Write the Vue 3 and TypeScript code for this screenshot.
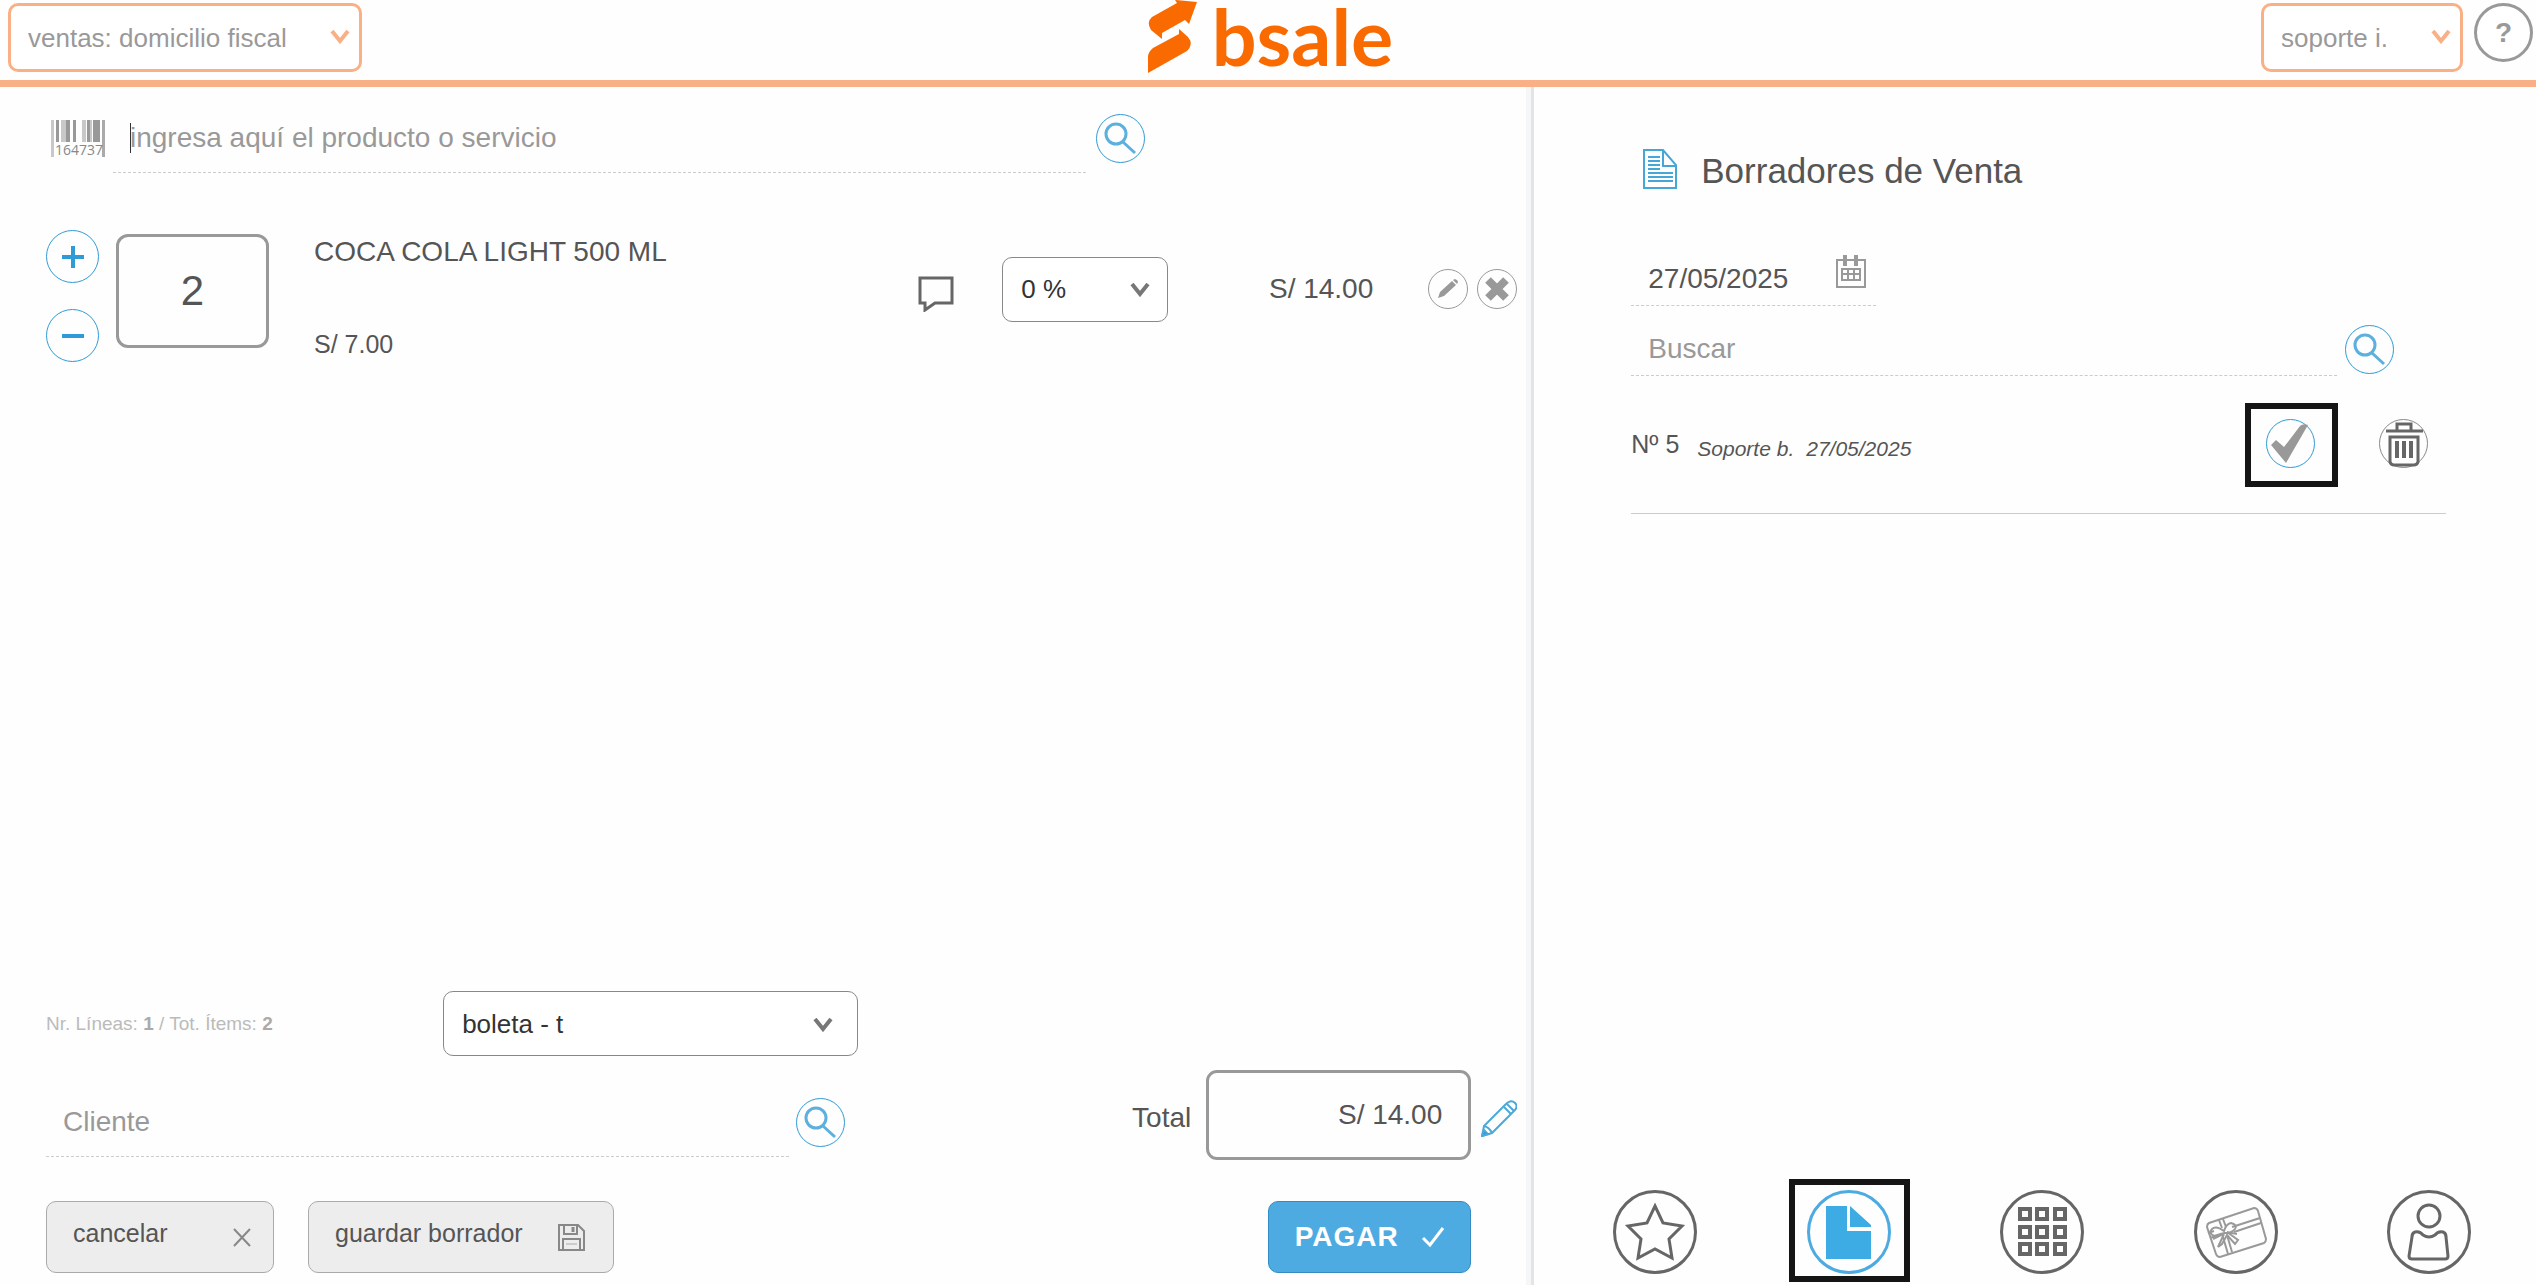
<script setup lang="ts">
import { ref } from 'vue'

interface Draft {
  id: number
  author: string
  date: string
}

const product = ref('')
const quantity = ref('2')
const client = ref('')
const total = ref('S/ 14.00')
const date = ref('27/05/2025')
const query = ref('')
const drafts = ref<Draft[]>([{ id: 5, author: 'Soporte b.', date: '27/05/2025' }])

const columnStops: number[] = [20, 37, 55]
const rowStops: number[] = [19, 37, 54]
</script>

<template>
  <div class="app">
    <header class="topbar">
      <div class="picker picker-branch">
        <select aria-label="Sucursal">
          <option>ventas: domicilio fiscal</option>
        </select>
        <svg class="chevron" width="20" height="14" viewBox="0 0 20 14"><path d="M2 1 10 11 18 1" /></svg>
      </div>
      <a class="logo" href="#" aria-label="bsale">
        <svg width="49" height="73" viewBox="0 0 49 73">
          <path d="M27 0H28L49 2 41 24 37 20 14 33V39L3 30Q-2 22 4 17L29 3Z" />
          <path d="M31 29 40 37Q46 44 39 51L0 73V56Q1 51 5 48L31 34Z" />
        </svg>
        <span>bsale</span>
      </a>
      <div class="account">
        <div class="picker picker-user">
          <select aria-label="Usuario">
            <option>soporte i.</option>
          </select>
          <svg class="chevron" width="20" height="14" viewBox="0 0 20 14"><path d="M2 1 10 11 18 1" /></svg>
        </div>
        <button class="help" type="button">?</button>
      </div>
    </header>

    <main class="workspace">
      <section class="sale">
        <div class="product-search">
          <svg class="barcode" width="54" height="37" viewBox="0 0 54 37">
            <g fill="#c8c8c8">
              <rect x="0" y="0" width="3" height="37" />
              <rect x="10" y="0" width="5" height="22" />
              <rect x="31" y="0" width="4" height="22" />
              <rect x="39" y="0" width="2" height="22" />
            </g>
            <g fill="#999">
              <rect x="5" y="0" width="3" height="22" />
              <rect x="15" y="0" width="4" height="22" />
              <rect x="22" y="0" width="3" height="22" />
              <rect x="36" y="0" width="3" height="22" />
              <rect x="42" y="0" width="7" height="22" />
              <rect x="51" y="0" width="3" height="37" fill="#aaa" />
            </g>
            <text x="4" y="35">164737</text>
          </svg>
          <div class="field">
            <input v-model="product" type="text" placeholder="ingresa aquí el producto o servicio" aria-label="Producto o servicio" />
            <span class="caret"></span>
          </div>
          <button class="round search" type="button" aria-label="Buscar producto">
            <svg width="47" height="47" viewBox="0 0 47 47"><circle cx="19" cy="19" r="10" /><path d="m26 27 12 11" /></svg>
          </button>
        </div>

        <div class="item">
          <div class="steppers">
            <button type="button" aria-label="Agregar">
              <svg width="22" height="22" viewBox="0 0 22 22"><path d="M0 11H22M11 0V22" /></svg>
            </button>
            <button type="button" aria-label="Quitar">
              <svg width="22" height="22" viewBox="0 0 22 22"><path d="M0 11H22" /></svg>
            </button>
          </div>
          <input v-model="quantity" class="quantity" type="text" aria-label="Cantidad" />
          <div class="description">
            <div class="name">COCA COLA LIGHT 500 ML</div>
            <div class="unit-price">S/ 7.00</div>
          </div>
          <div class="item-tools">
            <button class="plain comment" type="button" aria-label="Comentario">
              <svg width="36" height="36" viewBox="0 0 36 36"><path d="M2 2H34V27H17L7 34V27H2Z" fill="none" stroke="#666" stroke-width="3" /></svg>
            </button>
            <div class="picker picker-discount">
              <select aria-label="Descuento">
                <option>0 %</option>
              </select>
              <svg class="chevron" width="20" height="14" viewBox="0 0 20 14"><path d="M2 1 10 11 18 1" /></svg>
            </div>
            <div class="amount">S/ 14.00</div>
            <button class="round small" type="button" aria-label="Editar">
              <svg width="38" height="38" viewBox="0 0 38 38"><path d="m9 28 2-6L23 11l4 4-12 11ZM24 10l2-1q3 1 3 3l-1 2Z" fill="#999" /></svg>
            </button>
            <button class="round small" type="button" aria-label="Eliminar">
              <svg width="38" height="38" viewBox="0 0 38 38"><path d="m10 10 18 18M28 10 10 28" stroke="#999" stroke-width="8" /></svg>
            </button>
          </div>
        </div>

        <footer class="checkout">
          <div class="document">
            <div class="document-row">
              <div class="counts">Nr. Líneas: <b>1</b> / Tot. Ítems: <b>2</b></div>
              <div class="picker picker-document">
                <select aria-label="Documento">
                  <option>boleta - t</option>
                </select>
                <svg class="chevron" width="20" height="14" viewBox="0 0 20 14"><path d="M2 1 10 11 18 1" /></svg>
              </div>
            </div>
            <div class="client-row">
              <div class="field">
                <input v-model="client" type="text" placeholder="Cliente" aria-label="Cliente" />
              </div>
              <button class="round search" type="button" aria-label="Buscar cliente">
                <svg width="47" height="47" viewBox="0 0 47 47"><circle cx="19" cy="19" r="10" /><path d="m26 27 12 11" /></svg>
              </button>
            </div>
            <div class="actions">
              <button class="secondary cancel" type="button">
                <span>cancelar</span>
                <svg width="18" height="19" viewBox="0 0 18 19"><path d="m1 1 16 17M17 1 1 18" fill="none" stroke="#888" stroke-width="2" /></svg>
              </button>
              <button class="secondary save" type="button">
                <span>guardar borrador</span>
                <svg width="27" height="27" viewBox="0 0 27 27" fill="none" stroke="#888" stroke-width="2">
                  <path d="M1 1H20L26 7V26H1ZM6 1V10H19V1M5 26V15H22V26" />
                  <path d="M15 3V8" stroke-width="3" />
                  <path d="M8 20H19" stroke="#ccc" />
                </svg>
              </button>
            </div>
          </div>

          <div class="payment">
            <div class="total-row">
              <label for="total">Total</label>
              <input id="total" v-model="total" type="text" />
              <button class="plain edit-total" type="button" aria-label="Editar total">
                <svg width="36" height="37" viewBox="0 0 36 37" fill="none" stroke="#4ba9d9" stroke-width="2">
                  <path d="M1 36 3 26 25 4Q30-1 34 3T32 12L11 33Z" />
                  <path d="M23 7 30 14M26 4 33 11M3 26Q8 27 11 33" />
                  <path d="m1 36 2-6 4 4Z" fill="#2f94cb" />
                </svg>
              </button>
            </div>
            <button class="pay" type="button">
              <span>PAGAR</span>
              <svg width="24" height="22" viewBox="0 0 24 22"><path d="m2 12 7 7L22 2" fill="none" stroke="#fff" stroke-width="3" /></svg>
            </button>
          </div>
        </footer>
      </section>

      <aside class="side">
        <div class="drafts">
          <h1>
            <svg width="34" height="40" viewBox="0 0 34 40" fill="none" stroke="#45a6d8" stroke-width="2">
              <path d="M1 1H20L33 16V39H1ZM20 1V17H33" />
              <path d="M5 8H17M5 12H17M5 16H17M5 20H17M5 24H30M5 28H30M5 32H30" />
            </svg>
            <span>Borradores de Venta</span>
          </h1>
          <div class="date-field">
            <input v-model="date" type="text" aria-label="Fecha" />
            <button class="plain" type="button" aria-label="Calendario">
              <svg width="30" height="34" viewBox="0 0 30 34" fill="none" stroke="#999" stroke-width="2">
                <path d="M1 5H29V32H1ZM6 14H24V25H6ZM12 14V25M18 14V25M6 19H24" />
                <path d="M9 0V11M20 0V11" stroke-width="4" />
              </svg>
            </button>
          </div>
          <div class="draft-search">
            <div class="field">
              <input v-model="query" type="text" placeholder="Buscar" aria-label="Buscar" />
            </div>
            <button class="round search" type="button" aria-label="Buscar borrador">
              <svg width="47" height="47" viewBox="0 0 47 47"><circle cx="19" cy="19" r="10" /><path d="m26 27 12 11" /></svg>
            </button>
          </div>
          <ul>
            <li v-for="draft in drafts" :key="draft.id">
              <span class="number">Nº {{ draft.id }}</span>
              <span class="detail"><i>{{ draft.author }}</i><i>{{ draft.date }}</i></span>
              <button class="round accept" type="button" aria-label="Usar borrador">
                <svg width="47" height="47" viewBox="0 0 47 47"><path d="m4 25 5-5 8 7L33 6Q36 3 41 5L19 43Z" fill="#999" /></svg>
              </button>
              <button class="round discard" type="button" aria-label="Eliminar borrador">
                <svg width="47" height="47" viewBox="0 0 47 47" fill="none" stroke="#666">
                  <path d="M17 11V4H31V11M6 11H43" stroke-width="3" />
                  <path d="M10 17H38V42Q37 45 34 45H14Q11 45 10 42Z" stroke-width="3" />
                  <path d="M17 21V38M24 21V38M31 21V38" stroke-width="4" />
                </svg>
              </button>
            </li>
          </ul>
        </div>

        <nav>
          <button type="button" aria-label="Favoritos">
            <svg width="78" height="78" viewBox="3 3 78 78">
              <path d="M42 16 50 33 69 36 56 49 59 68 42 59 25 68 28 49 15 36 34 33Z" fill="none" stroke="#666" stroke-width="3" />
            </svg>
          </button>
          <button class="active" type="button" aria-label="Borradores">
            <svg width="78" height="78" viewBox="3 3 78 78" fill="#3dace4">
              <path d="M19 16H40V41H64V69H19ZM43 16 64 35V37H43Z" />
            </svg>
          </button>
          <button type="button" aria-label="Categorías">
            <svg width="78" height="78" viewBox="3 3 78 78" fill="none" stroke="#666" stroke-width="4">
              <template v-for="y in rowStops" :key="y">
                <rect v-for="x in columnStops" :key="x" :x="x" :y="y" width="10" height="10" />
              </template>
            </svg>
          </button>
          <button type="button" aria-label="Gift cards">
            <svg width="78" height="78" viewBox="3 3 78 78" fill="none" stroke="#999" stroke-width="2">
              <path d="M15 33 60 18Q63 18 64 21L72 49Q72 52 70 53L26 67Q23 67 22 64L13 37Q13 34 15 33Z" />
              <path d="M25 30 28 38M29 29 32 37M33 45 38 62M29 47 34 64M38 37 66 28M40 42 67 33M14 43 20 41M16 48 22 46" />
              <path d="M30 41Q22 35 18 39T20 46L30 43Q38 43 41 39T37 33Q32 34 30 41ZM29 44 19 49M30 44 24 57 28 54 33 45 41 54 44 50 33 42M33 42 43 44" />
            </svg>
          </button>
          <button type="button" aria-label="Clientes">
            <svg width="78" height="78" viewBox="3 3 78 78" fill="none" stroke="#666" stroke-width="3">
              <circle cx="42" cy="26" r="11" />
              <path d="M28 42Q33 41 36 45 42 49 48 45 51 41 56 42 59 43 59 47L61 66Q61 69 58 69H25Q22 69 22 66L25 47Q25 43 28 42Z" />
            </svg>
          </button>
        </nav>
      </aside>
    </main>
  </div>
</template>

<style>
body {
  margin: 0;
  background: #fefefe;
}
</style>

<style scoped>
* {
  box-sizing: border-box;
}
.app {
  display: flex;
  flex-direction: column;
  min-height: 100vh;
  font: 28px/32px "Liberation Sans", Arial, sans-serif;
  color: #555;
}
button,
input,
select {
  font: inherit;
  color: inherit;
  margin: 0;
  padding: 0;
  outline: none;
}
button {
  flex: none;
  display: flex;
  align-items: center;
  justify-content: center;
  cursor: pointer;
}
svg {
  flex: none;
  display: block;
}
input {
  min-width: 0;
  background: transparent;
}
input::placeholder {
  color: #999;
  opacity: 1;
}

/* top bar */
.topbar {
  display: grid;
  grid-template-columns: 1fr auto 1fr;
  align-items: start;
  height: 87px;
  padding: 0 3px 0 8px;
  border-bottom: 7px solid #fab087;
}
.picker {
  position: relative;
}
.picker select {
  display: block;
  width: 100%;
  appearance: none;
  border: 1px solid #888;
  border-radius: 10px;
  background: #fff;
  color: #333;
  font-size: 26px;
  height: 65px;
  padding-left: 18px;
}
.chevron {
  position: absolute;
  top: 50%;
  right: 18px;
  margin-top: -6px;
  fill: none;
  stroke: #777;
  stroke-width: 4;
  pointer-events: none;
}
.picker-branch,
.picker-user {
  margin-top: 3px;
}
.picker-branch select,
.picker-user select {
  height: 69px;
  padding-left: 17px;
  border: 3px solid #fab087;
  color: #999;
}
.picker-branch .chevron,
.picker-user .chevron {
  right: 12px;
  margin-top: -8px;
  stroke: #fab087;
}
.picker-branch {
  width: 354px;
}
.picker-user {
  width: 202px;
}
.logo {
  display: flex;
  gap: 15px;
  color: #f96a00;
  text-decoration: none;
}
.logo svg {
  fill: currentColor;
}
.logo span {
  font: bold 79px/72px Lato, sans-serif;
}
.account {
  display: flex;
  justify-content: flex-end;
  gap: 11px;
}
.help {
  width: 59px;
  height: 59px;
  margin-top: 3px;
  border: 3px solid #999;
  border-radius: 50%;
  background: #fff;
  color: #999;
  font-weight: bold;
}

/* shared controls */
.plain {
  border: 0;
  background: none;
}
.round {
  width: 49px;
  height: 49px;
  border: 1px solid #2f9bd6;
  border-radius: 50%;
  background: none;
}
.search svg {
  fill: none;
  stroke: #5bb0de;
  stroke-width: 3;
}
.field {
  position: relative;
  flex: 1;
  display: flex;
  height: 70px;
  border-bottom: 1px dashed #ccc;
}
.field input {
  flex: 1;
  border: 0;
  padding-left: 17px;
}

/* sale */
.workspace {
  flex: 1;
  display: flex;
}
.sale {
  flex: none;
  display: flex;
  flex-direction: column;
  width: 60.5%;
  padding: 16px 14px 12px 46px;
  border-right: 3px solid #e3e4e6;
  box-shadow: inset -5px 0 #f4f6f8;
}
.product-search {
  display: flex;
  align-items: center;
  width: 74.7%;
  padding-left: 5px;
}
.product-search .field {
  margin: 0 10px 0 8px;
}
.barcode {
  overflow: visible;
}
.barcode text {
  font: 14px "Open Sans", sans-serif;
  fill: #888;
}
.caret {
  position: absolute;
  left: 17px;
  top: 20px;
  width: 1px;
  height: 30px;
  background: #333;
}
.item {
  display: flex;
  align-items: flex-start;
  margin-top: 57px;
}
.steppers {
  display: grid;
  gap: 26px;
}
.steppers button {
  width: 53px;
  height: 53px;
  border: 1px solid #2f9bd6;
  border-radius: 50%;
  background: none;
}
.steppers path {
  stroke: #2f9bd6;
  stroke-width: 4;
}
.quantity {
  width: 153px;
  height: 114px;
  margin: 4px 45px 0 17px;
  border: 3px solid #999;
  border-radius: 12px;
  text-align: center;
  font-size: 42px;
}
.description {
  flex: 1;
  display: grid;
  gap: 60px;
  padding-top: 6px;
}
.unit-price {
  font-size: 25px;
}
.item-tools {
  display: flex;
  align-items: center;
  height: 118px;
}
.comment {
  padding-top: 10px;
}
.picker-discount {
  width: 166px;
  margin-left: 48px;
}
.amount {
  width: 205px;
  margin-right: 55px;
  text-align: right;
}
.small {
  width: 40px;
  height: 40px;
  border-color: #999;
}
.small + .small {
  margin-left: 9px;
}

/* checkout */
.checkout {
  display: flex;
  align-items: flex-end;
  justify-content: space-between;
  margin-top: auto;
}
.document {
  width: 55.2%;
}
.document-row {
  display: flex;
  align-items: center;
  justify-content: space-between;
}
.counts {
  font-size: 19px;
  color: #bbb;
}
.counts b {
  color: #aaa;
}
.picker-document {
  width: 415px;
}
.picker-document .chevron {
  right: 25px;
}
.client-row {
  display: flex;
  align-items: center;
  gap: 7px;
  margin: 31px 13px 44px 0;
}
.actions {
  display: flex;
  gap: 34px;
}
.secondary {
  justify-content: space-between;
  height: 72px;
  padding: 0 22px 0 26px;
  border: 1px solid #aaa;
  border-radius: 10px;
  background: #ededed;
  font-size: 25px;
}
.secondary span {
  padding-bottom: 8px;
}
.cancel {
  width: 228px;
}
.save {
  width: 306px;
  padding-right: 28px;
}
.total-row {
  display: flex;
  align-items: center;
}
.total-row label,
.edit-total {
  padding-top: 6px;
}
.total-row input {
  width: 265px;
  height: 90px;
  margin: 0 10px 0 15px;
  padding-right: 26px;
  border: 3px solid #999;
  border-radius: 11px;
  text-align: right;
}
.pay {
  gap: 22px;
  width: 203px;
  height: 72px;
  margin: 41px 46px 0 auto;
  border: 1px solid #338dc4;
  border-radius: 10px;
  background: #4dabe1;
  color: #fff;
  font-weight: bold;
  letter-spacing: 1px;
}

/* side panel */
.side {
  flex: 1;
  display: flex;
  flex-direction: column;
  justify-content: space-between;
  padding: 62px 65px 11px 79px;
}
.drafts {
  margin: 0 25px 0 18px;
}
h1 {
  display: flex;
  align-items: center;
  gap: 24px;
  height: 40px;
  margin: 0 0 64px;
  padding-left: 12px;
  font-size: 35px;
  line-height: 40px;
  font-weight: normal;
}
h1 span {
  padding-top: 4px;
}
.date-field {
  display: flex;
  width: 245px;
  height: 53px;
  border-bottom: 1px dashed #ccc;
}
.date-field input {
  flex: 1;
  border: 0;
  padding-left: 17px;
}
.date-field button {
  margin: 2px 10px 16px 0;
}
.draft-search {
  display: flex;
  align-items: center;
  gap: 8px;
  margin: 16px 52px 0 0;
}
.draft-search .field {
  height: 54px;
}
ul {
  list-style: none;
  margin: 0;
  padding: 0;
}
li {
  display: flex;
  align-items: center;
  padding: 43px 18px 45px 0;
  border-bottom: 1px solid #ccc;
}
.number {
  font-size: 25px;
}
.detail {
  flex: 1;
  display: flex;
  gap: 12px;
  padding: 10px 0 0 18px;
  font-size: 21px;
}
.discard {
  margin-left: 64px;
  border-color: #888;
}
nav {
  display: flex;
  justify-content: space-between;
}
nav button {
  width: 84px;
  height: 84px;
  border: 3px solid #666;
  border-radius: 50%;
  background: none;
}
nav .active {
  border-color: #4dabe1;
}
/* square frames around the highlighted controls */
.accept,
.active {
  position: relative;
}
.accept::after,
.active::after {
  content: "";
  position: absolute;
  border: 6px solid #151515;
}
.accept::after {
  inset: -17px -24px -20px -22px;
}
.active::after {
  inset: -14px -22px -11px -21px;
}
</style>
